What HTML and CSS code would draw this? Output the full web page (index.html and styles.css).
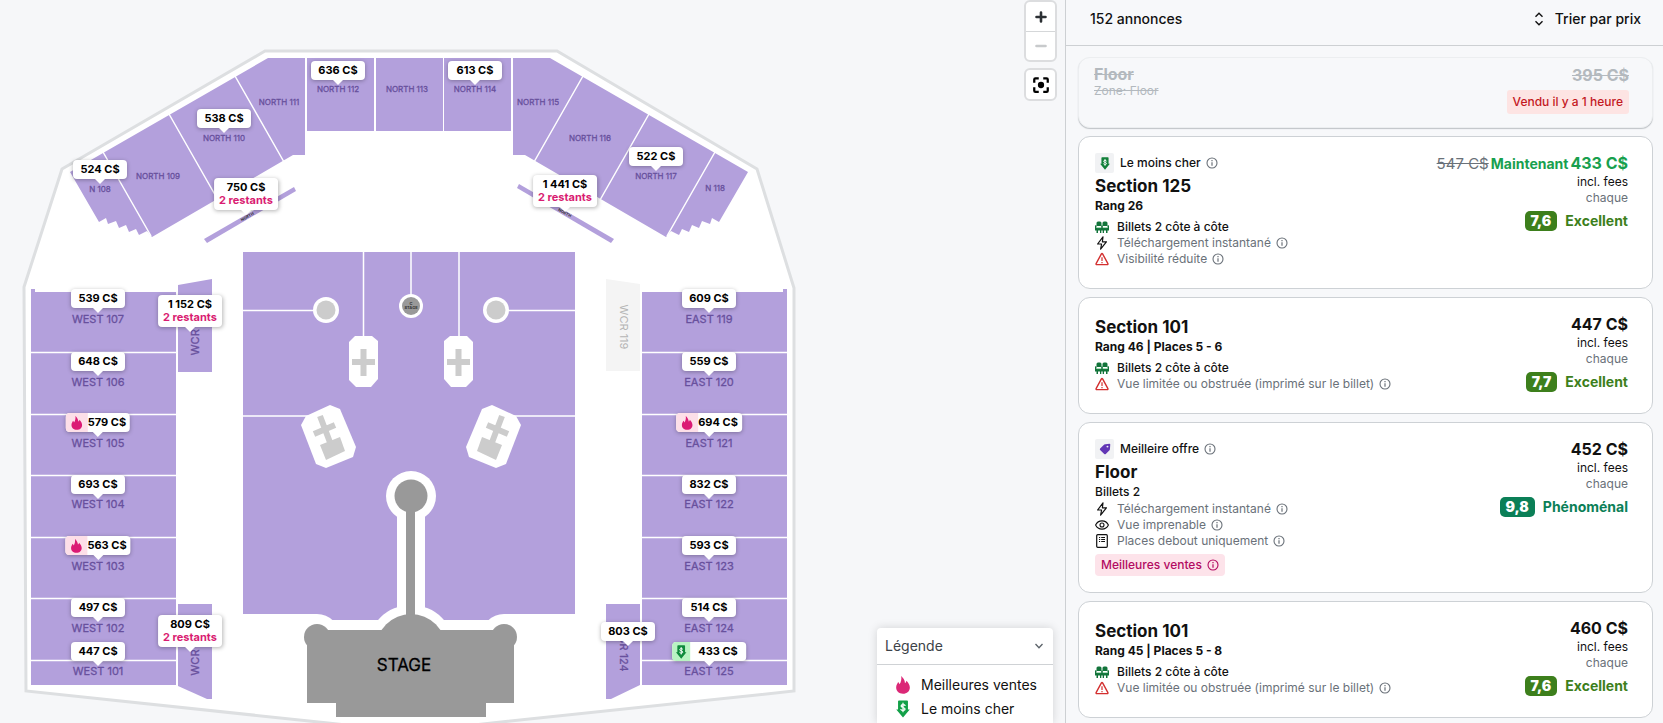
FILE: index.html
```html
<!DOCTYPE html>
<html lang="fr">
<head>
    <meta charset="UTF-8">
    <meta name="viewport" content="width=device-width, initial-scale=1.0">
    <title>Billets</title>
    <link rel="stylesheet" href="styles.css">
</head>
<body>
    <!-- icons -->
    <svg class="icon-defs" aria-hidden="true">
        <symbol id="i-fire" viewBox="0 0 16 20">
            <path fill="currentColor" d="M6 0C8 2 10.200 4.500 10.200 8C11 7.500 11.600 6.500 11.800 5.200C14 7.500 15.600 10 15.600 12.800C15.600 17 12.400 19.800 8 19.800C3.500 19.800.4 17 .4 12.900C.4 10.200 1.800 8.800 2.600 6.800C3.400 7.600 3.800 8.400 4 9.300C5.800 7 6.600 3.500 6 0Z"/>
        </symbol>
        <symbol id="i-cheap" viewBox="0 0 16 20">
            <path fill="currentColor" d="M3.500 .5H12.500Q13.500 .5 13.500 1.500V10.500H15.500L8 19.500L.5 10.500H2.500V1.500Q2.500 .5 3.500 .5Z"/>
            <path fill="none" stroke="#fff" stroke-width="1.400" stroke-linecap="round" d="M10.300 6C9.800 4.900 6 4.500 5.900 6.600C5.900 8.900 10.300 7.800 10.300 10.100C10.300 12.100 6.300 12 5.700 10.600M8 3.600V13"/>
        </symbol>
        <symbol id="i-tag" viewBox="0 0 16 16">
            <path fill="currentColor" fill-rule="evenodd" d="M8.500 1.500L14 1Q15 1 15 2L14.600 8Q14.500 9 14 9.500L9 14.600Q8 15.500 7 14.600L1.500 9.300Q.6 8.300 1.500 7.200L7 2Q7.600 1.500 8.500 1.500ZM11.300 3.500A1.300 1.300 0 1 0 11.300 6.100A1.300 1.300 0 1 0 11.300 3.500Z"/>
        </symbol>
        <symbol id="i-info" viewBox="0 0 12 12">
            <circle cx="6" cy="6" r="5" fill="none" stroke="currentColor" stroke-width="1.100"/>
            <path stroke="currentColor" stroke-width="1.200" d="M6 5.200V8.800M6 3.100V4.300"/>
        </symbol>
        <symbol id="i-seats" viewBox="0 0 14 12">
            <path fill="#12743a" d="M1.500 5V2Q1.500 .5 3 .5H5Q6.500 .5 6.500 2V5ZM7.500 5V2Q7.500 .5 9 .5H11Q12.500 .5 12.500 2V5ZM0 4.500Q1 4 1.500 5V7H6.200V5Q7 4 7.800 5V7H12.500V5Q13 4 14 4.500V9.500H0ZM1.500 9H3V12H1.500ZM5 9H6.300V12H5ZM7.700 9H9V12H7.700ZM11 9H12.500V12H11Z"/>
            <path stroke="#8fd3a5" stroke-width=".8" d="M2 6.600H6M8 6.600H12"/>
        </symbol>
        <symbol id="i-bolt" viewBox="0 0 14 14">
            <path fill="none" stroke="#111" stroke-width="1.200" stroke-linejoin="round" d="M8 .8L2.600 8H6.600L5.600 13.200L11.400 5.800H7.400Z"/>
        </symbol>
        <symbol id="i-warn" viewBox="0 0 14 14">
            <path fill="none" stroke="#d32f2f" stroke-width="1.400" stroke-linejoin="round" d="M7.600 1.900L12.900 11.600Q13.200 12.600 12.200 12.600H1.800Q.8 12.600 1.100 11.600L6.400 1.900Q7 1.100 7.600 1.900Z"/>
            <path stroke="#d32f2f" stroke-width="1.200" d="M7 5.200V9M7 10V11.300"/>
        </symbol>
        <symbol id="i-eye" viewBox="0 0 14 14">
            <path fill="none" stroke="#111" stroke-width="1.100" d="M.6 7C3.200 1.500 10.800 1.500 13.400 7C10.800 12.500 3.200 12.500 .6 7Z"/>
            <circle cx="7" cy="7" r="2" fill="none" stroke="#111" stroke-width="1.100"/>
        </symbol>
        <symbol id="i-doc" viewBox="0 0 14 14">
            <rect x="1.700" y=".7" width="10.600" height="12.600" rx="1" fill="none" stroke="#111" stroke-width="1.200"/>
            <path stroke="#111" d="M4 3.500H5.200M6.200 3.500H10M4 5.500H5.200M6.200 5.500H10M4 7.500H5.200M6.200 7.500H10"/>
        </symbol>
    </svg>

    <main class="map">
        <svg class="venue" width="1065" height="740" viewBox="0 0 1065 740" role="img" aria-label="Plan de la salle">
            <polygon class="outline" points="265,51 557,51 757,169 794,288 794,691 492,723 410,732 328,723 26,691 24,287 62,169"/>

            <!-- north bowl, left half and its mirror -->
            <g id="bowl">
                <polygon class="section" points="268,58 305,58 305,155 293,155 152,237 147,231 139,235 136,229 129,232 126,225 119,228 116,221 108,224 106,218 99,222 70,172"/>
                <path class="split" d="M235 76L284 162M169 114L218 200M103 152L151 236"/>
            </g>
            <use href="#bowl" transform="translate(818 0) scale(-1 1)"/>
            <rect class="section" x="307" y="58" width="67" height="73"/>
            <rect class="section" x="376" y="58" width="67" height="73"/>
            <rect class="section" x="444" y="58" width="67" height="73"/>
            <polygon class="section" points="204,239 207,243 296,191 294,187"/>
            <polygon class="section" points="517,188 519,184 614,239 611,243"/>

            <!-- west / east stands -->
            <g id="stand">
                <polygon class="section" points="31,289 35,289 35,292 176,292 176,685 31,685"/>
                <path class="split" d="M31 352.500H176M31 414.500H176M31 475.500H176M31 537.500H176M31 598.500H176M31 660.500H176"/>
            </g>
            <use href="#stand" transform="translate(818 0) scale(-1 1)"/>
            <polygon class="section" points="178,285 212,279 212,372 178,372"/>
            <polygon class="section" points="178,604 212,604 212,699 207,699 178,686"/>
            <polygon class="closed" points="606,279 640,284 640,371 606,371"/>
            <polygon class="section" points="606,604 640,604 640,685 611,699 606,699"/>

            <!-- floor -->
            <polygon class="section" points="243,252 575,252 575,614 504,614 504,620 317,620 317,614 243,614"/>
            <path class="split" d="M363.500 252V340M411 252V300M459 252V340M243 310.500H320M500 310.500H575M243 416H310M512 416H575"/>
            <g class="halo">
                <circle cx="411" cy="496" r="25"/>
                <rect x="397" y="500" width="28" height="120"/>
                <circle cx="411" cy="649" r="44"/>
                <circle cx="317" cy="637" r="23"/>
                <circle cx="504" cy="637" r="23"/>
                <circle cx="411" cy="306" r="12"/>
            </g>
            <g id="platforms">
                <circle class="halo" cx="326" cy="310" r="13"/>
                <circle class="prop" cx="326" cy="310" r="9.500"/>
                <polygon class="halo" points="355,336 372,336 378,341 378,379 371,387 356,387 349,380 349,342"/>
                <path class="prop-line" d="M352 362H375M363.500 349V376"/>
                <polygon class="halo" points="301,425 306,416 330,405 340,409 356,447 353,457 326,468 316,464"/>
                <path class="prop-line" d="M320 416L331 445M314 434L335 425"/>
                <polygon class="prop" points="320,445 340,437 345,451 326,460"/>
            </g>
            <use href="#platforms" transform="translate(822 0) scale(-1 1)"/>

            <!-- stage -->
            <g class="stage">
                <circle cx="411" cy="306" r="9"/>
                <circle cx="411" cy="496" r="16.500"/>
                <rect x="406" y="505" width="9" height="120"/>
                <circle cx="411" cy="649" r="35"/>
                <circle cx="317" cy="637" r="13"/>
                <circle cx="504" cy="637" r="13"/>
                <path d="M307 630H514V703H486V717H336V703H307Z"/>
            </g>
            <text class="stage-label" x="404" y="671">STAGE</text>
            <text class="micro" x="411" y="305">C</text>
            <text class="micro" x="411" y="309">STAGE</text>

            <g class="label-sm">
                <text x="100" y="192">N 108</text>
                <text x="158" y="179">NORTH 109</text>
                <text x="224" y="141">NORTH 110</text>
                <text x="279" y="105">NORTH 111</text>
                <text x="338" y="92">NORTH 112</text>
                <text x="407" y="92">NORTH 113</text>
                <text x="475" y="92">NORTH 114</text>
                <text x="538" y="105">NORTH 115</text>
                <text x="590" y="141">NORTH 116</text>
                <text x="656" y="179">NORTH 117</text>
                <text x="715" y="191">N 118</text>
            </g>
            <text class="micro" transform="translate(248 218) rotate(-30)">NORTH</text>
            <text class="micro" transform="translate(564 214) rotate(30)">NORTH</text>
            <g class="label">
                <text x="98" y="323">WEST 107</text>
                <text x="98" y="386">WEST 106</text>
                <text x="98" y="447">WEST 105</text>
                <text x="98" y="508">WEST 104</text>
                <text x="98" y="570">WEST 103</text>
                <text x="98" y="632">WEST 102</text>
                <text x="98" y="675">WEST 101</text>
                <text x="709" y="323">EAST 119</text>
                <text x="709" y="386">EAST 120</text>
                <text x="709" y="447">EAST 121</text>
                <text x="709" y="508">EAST 122</text>
                <text x="709" y="570">EAST 123</text>
                <text x="709" y="632">EAST 124</text>
                <text x="709" y="675">EAST 125</text>
                <text transform="translate(199 332) rotate(-90)">WCR 107</text>
                <text transform="translate(199 653) rotate(-90)">WCR 101</text>
                <text transform="translate(620 648) rotate(90)">WCR 124</text>
                <text class="label-closed" transform="translate(620 327) rotate(90)">WCR 119</text>
            </g>
        </svg>
        <div class="pins" id="pins"></div>

        <div class="controls">
            <div class="zoom">
                <button type="button" aria-label="Zoom avant">
                    <svg width="12" height="12" viewBox="0 0 12 12"><path d="M6 1.500V10.500M1.500 6H10.500" stroke="#2b2f33" stroke-width="2.600" stroke-linecap="round"/></svg>
                </button>
                <button type="button" aria-label="Zoom arrière" disabled>
                    <svg width="12" height="12" viewBox="0 0 12 12"><path d="M1.500 6H10.500" stroke="#c8cacc" stroke-width="2.600" stroke-linecap="round"/></svg>
                </button>
            </div>
            <button class="recenter" type="button" aria-label="Recentrer">
                <svg width="18" height="18" viewBox="0 0 16 16"><circle cx="8" cy="8" r="2.800"/><path fill="none" stroke="#000" stroke-width="2" d="M2 6V3Q2 2 3 2H6M10 2H13Q14 2 14 3V6M14 10V13Q14 14 13 14H10M6 14H3Q2 14 2 13V10"/></svg>
            </button>
        </div>

        <div class="legend">
            <button class="legend-head" type="button">
                Légende
                <svg width="10" height="10" viewBox="0 0 10 10"><path d="M1.500 3L5 6.800L8.500 3" fill="none" stroke="#5c636a" stroke-width="1.300"/></svg>
            </button>
            <ul class="legend-list">
                <li><svg class="pink" width="16" height="18"><use href="#i-fire"/></svg>Meilleures ventes</li>
                <li><svg class="green" width="16" height="18"><use href="#i-cheap"/></svg>Le moins cher</li>
            </ul>
        </div>
    </main>

    <aside class="sidebar">
        <header class="sidebar-head">
            <span>152 annonces</span>
            <button class="sort" type="button">
                <svg width="10" height="14" viewBox="0 0 10 14"><path d="M1.500 4.800L5 1.300L8.500 4.800M1.500 9.200L5 12.700L8.500 9.200" fill="none" stroke="#111" stroke-width="1.400"/></svg>
                Trier par prix
            </button>
        </header>

        <div class="listings">
            <article class="card sold">
                <div class="info">
                    <h2>Floor</h2>
                    <p class="zone">Zone: Floor</p>
                </div>
                <div class="pricing">
                    <div class="price">395 C$</div>
                    <span class="sold-badge">Vendu il y a 1 heure</span>
                </div>
            </article>

            <article class="card">
                <div class="info">
                    <div class="tag"><span class="tag-icon deep-green"><svg width="12" height="13"><use href="#i-cheap"/></svg></span>Le moins cher<svg class="i"><use href="#i-info"/></svg></div>
                    <h2>Section 125</h2>
                    <p class="row-name">Rang 26</p>
                    <ul class="features">
                        <li class="main"><svg><use href="#i-seats"/></svg>Billets 2 côte à côte</li>
                        <li><svg><use href="#i-bolt"/></svg>Téléchargement instantané<svg class="i"><use href="#i-info"/></svg></li>
                        <li><svg><use href="#i-warn"/></svg>Visibilité réduite<svg class="i"><use href="#i-info"/></svg></li>
                    </ul>
                </div>
                <div class="pricing">
                    <div class="price deal"><s>547 C$</s><span class="now">Maintenant</span>433 C$</div>
                    <div class="fees">incl. fees</div>
                    <div class="each">chaque</div>
                    <div class="score"><b>7,6</b>Excellent</div>
                </div>
            </article>

            <article class="card">
                <div class="info">
                    <h2>Section 101</h2>
                    <p class="row-name">Rang 46 | Places 5 - 6</p>
                    <ul class="features">
                        <li class="main"><svg><use href="#i-seats"/></svg>Billets 2 côte à côte</li>
                        <li><svg><use href="#i-warn"/></svg>Vue limitée ou obstruée (imprimé sur le billet)<svg class="i"><use href="#i-info"/></svg></li>
                    </ul>
                </div>
                <div class="pricing">
                    <div class="price">447 C$</div>
                    <div class="fees">incl. fees</div>
                    <div class="each">chaque</div>
                    <div class="score"><b>7,7</b>Excellent</div>
                </div>
            </article>

            <article class="card">
                <div class="info">
                    <div class="tag"><span class="tag-icon violet"><svg width="12" height="12"><use href="#i-tag"/></svg></span>Meilleire offre<svg class="i"><use href="#i-info"/></svg></div>
                    <h2>Floor</h2>
                    <p class="row-name plain">Billets 2</p>
                    <ul class="features">
                        <li><svg><use href="#i-bolt"/></svg>Téléchargement instantané<svg class="i"><use href="#i-info"/></svg></li>
                        <li><svg><use href="#i-eye"/></svg>Vue imprenable<svg class="i"><use href="#i-info"/></svg></li>
                        <li><svg><use href="#i-doc"/></svg>Places debout uniquement<svg class="i"><use href="#i-info"/></svg></li>
                    </ul>
                    <span class="best">Meilleures ventes<svg class="i"><use href="#i-info"/></svg></span>
                </div>
                <div class="pricing">
                    <div class="price">452 C$</div>
                    <div class="fees">incl. fees</div>
                    <div class="each">chaque</div>
                    <div class="score top"><b>9,8</b>Phénoménal</div>
                </div>
            </article>

            <article class="card">
                <div class="info">
                    <h2>Section 101</h2>
                    <p class="row-name">Rang 45 | Places 5 - 8</p>
                    <ul class="features">
                        <li class="main"><svg><use href="#i-seats"/></svg>Billets 2 côte à côte</li>
                        <li><svg><use href="#i-warn"/></svg>Vue limitée ou obstruée (imprimé sur le billet)<svg class="i"><use href="#i-info"/></svg></li>
                    </ul>
                </div>
                <div class="pricing">
                    <div class="price">460 C$</div>
                    <div class="fees">incl. fees</div>
                    <div class="each">chaque</div>
                    <div class="score"><b>7,6</b>Excellent</div>
                </div>
            </article>
        </div>
    </aside>

    <script>
        // x, y = tip of the pin on the map
        const pins = [
            { x: 100, y: 184, price: '524' },
            { x: 224, y: 133, price: '538' },
            { x: 338, y: 85, price: '636' },
            { x: 475, y: 85, price: '613' },
            { x: 656, y: 171, price: '522' },
            { x: 246, y: 215, price: '750', left: 2 },
            { x: 565, y: 212, price: '1 441', left: 2 },
            { x: 98, y: 313, price: '539' },
            { x: 98, y: 376, price: '648' },
            { x: 98, y: 437, price: '579', icon: 'fire' },
            { x: 98, y: 499, price: '693' },
            { x: 98, y: 560, price: '563', icon: 'fire' },
            { x: 98, y: 622, price: '497' },
            { x: 98, y: 666, price: '447' },
            { x: 190, y: 332, price: '1 152', left: 2 },
            { x: 190, y: 652, price: '809', left: 2 },
            { x: 709, y: 313, price: '609' },
            { x: 709, y: 376, price: '559' },
            { x: 709, y: 437, price: '694', icon: 'fire' },
            { x: 709, y: 499, price: '832' },
            { x: 709, y: 560, price: '593' },
            { x: 709, y: 622, price: '514' },
            { x: 709, y: 666, price: '433', icon: 'cheap' },
            { x: 628, y: 646, price: '803' }
        ];

        const layer = document.getElementById('pins');
        pins.forEach(p => {
            const el = document.createElement('button');
            el.type = 'button';
            el.className = 'pin' + (p.icon ? ' pin-' + p.icon : '');
            el.style.left = p.x + 'px';
            el.style.top = p.y + 'px';
            let html = '';
            if (p.icon) html += '<span class="pin-icon"><svg width="12" height="14"><use href="#i-' + p.icon + '"/></svg></span>';
            html += '<span class="pin-text">' + p.price + ' C$';
            if (p.left) html += '<em>' + p.left + ' restants</em>';
            el.innerHTML = html + '</span>';
            layer.appendChild(el);
        });
    </script>
</body>
</html>
```
FILE: styles.css
```css
* {
    box-sizing: border-box;
}
html, body {
    height: 100%;
    margin: 0;
    padding: 0;
}
body {
    display: flex;
    overflow: hidden;
    font-family: Inter, "Liberation Sans", sans-serif;
    font-size: 12px;
    line-height: 16px;
    color: #111;
    background: #f6f7f9;
}
h2, p, ul {
    margin: 0;
    padding: 0;
}
ul {
    list-style: none;
}
button {
    font: inherit;
    color: inherit;
    padding: 0;
    border: 0;
    background: none;
    cursor: pointer;
}
.icon-defs {
    position: absolute;
    width: 0;
    height: 0;
}

/* map */
.map {
    position: relative;
    flex: 1;
    min-width: 0;
    overflow: hidden;
}
.venue {
    display: block;
}
.outline {
    fill: #fff;
    stroke: #dddfe1;
    stroke-width: 3;
}
.section {
    fill: #b3a0dc;
}
.closed {
    fill: #f4f4f4;
}
.split {
    fill: none;
    stroke: #fff;
    stroke-width: 1.5;
}
.halo {
    fill: #fff;
}
.prop {
    fill: #ccc;
}
.prop-line {
    fill: none;
    stroke: #ccc;
    stroke-width: 6;
}
.stage {
    fill: #999;
}
.stage-label {
    font-size: 17px;
    text-anchor: middle;
    stroke: #000;
    stroke-width: 0.3;
}
.label, .label-sm {
    font-size: 11px;
    text-anchor: middle;
    fill: #68509d;
    stroke: #68509d;
    stroke-width: 0.3;
}
.label-sm {
    font-size: 8px;
}
.label-closed {
    fill: #b5b5b5;
    stroke: none;
}
.micro {
    font-size: 4px;
    font-weight: 700;
    text-anchor: middle;
    fill: #333;
}

/* price pins */
.pins {
    position: absolute;
    top: 0;
    left: 0;
}
.pin {
    position: absolute;
    display: flex;
    margin-top: -5px;
    min-width: 54px;
    border-radius: 4px;
    background: #fff;
    color: #000;
    font-size: 11px;
    font-weight: 700;
    line-height: 13px;
    white-space: nowrap;
    transform: translate(-50%, -100%);
    box-shadow: 0 1px 4px rgba(0, 0, 0, 0.3);
}
.pin::after {
    content: "";
    position: absolute;
    top: 100%;
    left: 50%;
    margin-left: -5px;
    border: 5px solid transparent;
    border-top-color: #fff;
    border-bottom: 0;
}
.pin-text {
    flex: 1;
    padding: 3px 5px;
    text-align: center;
}
.pin em {
    display: block;
    font-style: normal;
    color: #d91c72;
}
.pin-icon {
    display: flex;
    align-items: center;
    justify-content: center;
    width: 22px;
    border-radius: 4px 0 0 4px;
}
.pin-fire .pin-icon {
    background: #fddfe8;
    color: #db1a74;
}
.pin-fire .pin-text {
    padding: 3px 4px 3px 0;
}
.pin-cheap .pin-icon {
    width: 18px;
    background: #b9f3c3;
    color: #0f8a3c;
}
.pin-cheap .pin-text {
    padding: 3px 8px;
}

/* map controls */
.controls {
    position: absolute;
    top: 0;
    right: 8px;
    display: grid;
    gap: 6px;
}
.zoom, .recenter {
    width: 33px;
    border: 2px solid #dcdddf;
    border-radius: 6px;
    background: #fff;
}
.zoom button, .recenter {
    display: flex;
    align-items: center;
    justify-content: center;
}
.zoom button {
    width: 100%;
    height: 29px;
}
.zoom button + button {
    border-top: 1px solid #d5d7d9;
}
.recenter {
    height: 33px;
}
.legend {
    position: absolute;
    right: 12px;
    bottom: 0;
    width: 176px;
    background: #fff;
    border-radius: 4px 4px 0 0;
    box-shadow: 0 0 10px rgba(0, 0, 0, 0.15);
}
.legend-head {
    display: flex;
    align-items: center;
    justify-content: space-between;
    width: 100%;
    height: 37px;
    padding: 0 9px 0 8px;
    border-bottom: 1px solid #cfd2d5;
    font-size: 14px;
    color: #3c4248;
}
.legend-list {
    padding: 8px 16px 2px 18px;
    font-size: 14px;
    line-height: 24px;
}
.legend-list li {
    display: flex;
    align-items: center;
    gap: 10px;
}
.pink {
    color: #db2877;
}
.green {
    color: #12a048;
}
.deep-green {
    color: #12803a;
}
.violet {
    color: #6236b5;
}

/* sidebar */
.sidebar {
    flex: 0 0 598px;
    border-left: 1px solid #cdd0d3;
    background: #f7f8fa;
    overflow: hidden;
}
.sidebar-head {
    display: flex;
    align-items: center;
    justify-content: space-between;
    height: 46px;
    padding: 0 22px 8px 24px;
    border-bottom: 1px solid #cdd0d3;
    font-size: 14px;
    font-weight: 500;
}
.sort {
    display: flex;
    align-items: center;
    gap: 11px;
}
.listings {
    display: flex;
    flex-direction: column;
    gap: 8px;
    padding: 11px 10px 8px 12px;
}
.card {
    display: flex;
    justify-content: space-between;
    padding: 16px 24px 16px 16px;
    border: 1px solid #cdd1d5;
    border-radius: 12px;
    background: #fff;
}
.card h2 {
    margin-top: 2px;
    font-size: 17px;
    font-weight: 700;
    line-height: 22px;
}
.tag {
    display: flex;
    align-items: center;
    height: 20px;
    font-weight: 500;
}
.tag-icon {
    display: flex;
    align-items: center;
    justify-content: center;
    width: 19px;
    height: 20px;
    margin-right: 6px;
    border-radius: 2px;
    background: #f1f2f4;
}
.i {
    width: 12px;
    height: 12px;
    margin-left: 5px;
    color: #6a7179;
}
.row-name {
    margin-bottom: 4px;
    font-weight: 700;
    line-height: 18px;
}
.row-name.plain {
    margin-bottom: 0;
    font-weight: 500;
}
.features {
    margin-bottom: 5px;
}
.features li {
    display: flex;
    align-items: center;
    height: 16px;
    color: #6a7179;
}
.features li.main {
    color: #111;
    font-weight: 500;
}
.features li svg:first-child {
    width: 14px;
    height: 14px;
    margin-right: 8px;
}
.best {
    display: inline-flex;
    align-items: center;
    height: 22px;
    padding: 0 6px;
    border-radius: 4px;
    background: #fde3ea;
    color: #b30b62;
    font-weight: 500;
    vertical-align: top;
}
.best .i {
    color: inherit;
}
.pricing {
    display: flex;
    flex-direction: column;
    align-items: flex-end;
}
.price {
    font-size: 16px;
    font-weight: 700;
    line-height: 21px;
}
.deal {
    color: #18a04e;
}
.deal s {
    font-size: 15px;
    font-weight: 400;
    color: #6a7179;
}
.now {
    margin: 0 2px;
    font-size: 14px;
}
.each {
    color: #6a7179;
}
.score {
    display: flex;
    align-items: center;
    gap: 8px;
    margin-top: 5px;
    font-size: 14px;
    font-weight: 700;
    line-height: 20px;
    color: #3d7f1c;
}
.score b {
    padding: 0 6px;
    border-radius: 5px;
    background: #3d7f1c;
    color: #fff;
}
.score.top {
    color: #0b7f57;
}
.score.top b {
    background: #0b7f57;
}
.sold {
    padding: 7px 23px 13px 15px;
    border-color: #eceef0;
    background: #f7f8fa;
    color: #b3b9be;
    box-shadow: 0 1px 1px #bfc3c7;
}
.sold h2 {
    margin-top: 0;
    font-size: 16px;
    line-height: 18px;
}
.sold h2, .sold .zone, .sold .price {
    text-decoration: line-through;
}
.sold-badge {
    margin-top: 4px;
    padding: 4px 6px;
    border-radius: 3px;
    background: #fde4e3;
    color: #c4191f;
    font-weight: 500;
}
```
